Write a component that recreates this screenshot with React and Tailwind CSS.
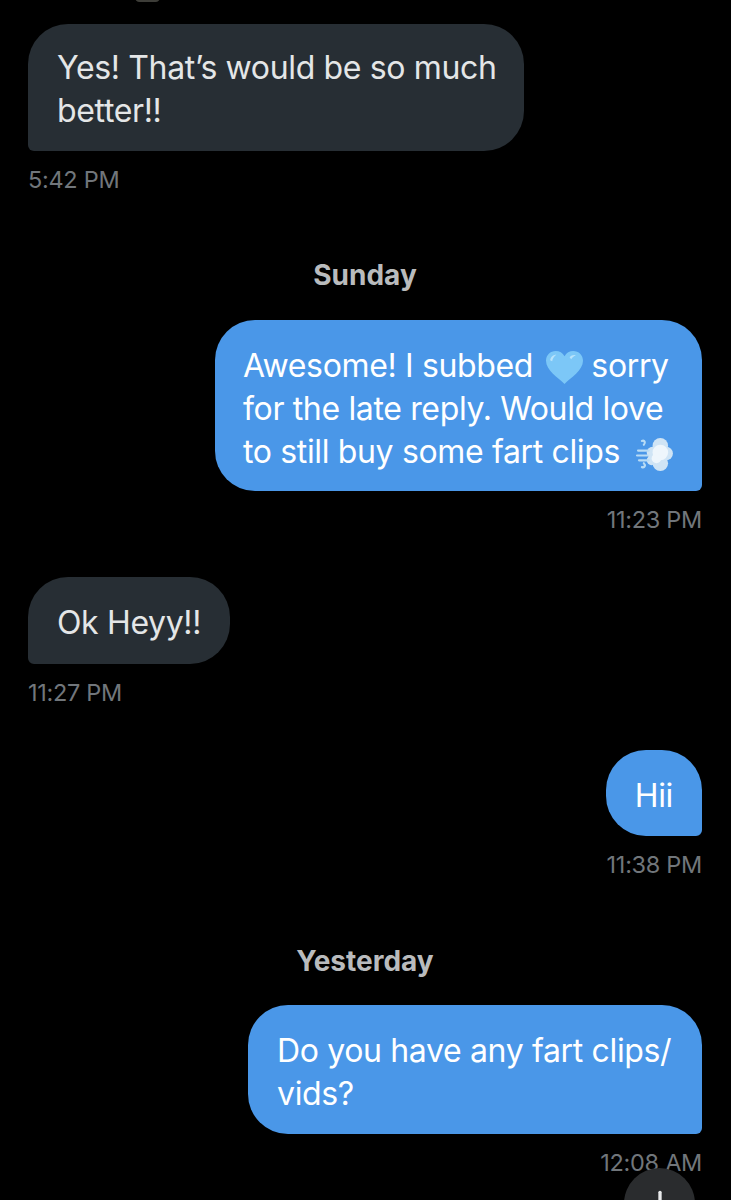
import { ArrowDown } from 'lucide-react';

const Heart = () => (
  <svg viewBox="0 0 36 32" className="inline-block w-[37px] h-[33px] align-[-7px] ml-[4px]">
    <path d="M18 32C12 26 0 19 0 9.500C0 4 4.200 0 9.500 0C13 0 16.300 1.800 18 5C19.700 1.800 23 0 26.500 0C31.800 0 36 4 36 9.500C36 19 24 26 18 32Z" fill="#7cc7f7" />
    <path d="M4 9C4.500 5.500 7 3.500 10 3.500C8 5 6.500 7 6 10Z" fill="#b9e3fb" />
    <path d="M23 6C24.500 4 27 3.500 29 4C27 5 25.500 6 24.500 8Z" fill="#b9e3fb" />
  </svg>
);

const Dash = () => (
  <svg viewBox="0 0 38 34" className="inline-block w-[37px] h-[33px] align-[-8px] ml-[7px]">
    <g fill="#cfe4f5">
      <circle cx="25" cy="8" r="8" />
      <circle cx="31" cy="16" r="7" />
      <circle cx="25" cy="26" r="8" />
      <circle cx="17" cy="15" r="6" />
      <circle cx="16" cy="23" r="5" />
    </g>
    <circle cx="25" cy="15" r="8" fill="#eef6fc" />
    <circle cx="21" cy="21" r="5" fill="#eef6fc" />
    <g stroke="#b8dcf5" strokeWidth="2.200" strokeLinecap="round" fill="none">
      <path d="M2 13H13" />
      <path d="M1 18H12" />
      <path d="M3 23H13" />
      <path d="M6 3C9 2 10 5 8 7" />
      <path d="M6 30C9 31 10 28 8 26" />
    </g>
  </svg>
);

const Bubble = ({ sent, className = '', children }) => (
  <div
    className={`text-[32px] leading-[43px] tracking-[-0.35px] whitespace-nowrap ${
      sent
        ? 'self-end bg-[#4a97e8] text-white rounded-t-[40px] rounded-bl-[40px] rounded-br-[6px]'
        : 'self-start bg-[#272e34] text-[#e4e6e7] rounded-t-[40px] rounded-br-[40px] rounded-bl-[6px]'
    } ${className}`}
  >
    {children}
  </div>
);

const Time = ({ sent, children }) => (
  <div className={`mt-[14px] h-[30px] text-[23.5px] leading-[30px] tracking-[-0.3px] text-[#71767b] ${sent ? 'self-end' : 'self-start'}`}>
    {children}
  </div>
);

const DayLabel = ({ className = '', children }) => (
  <div className={`self-center h-[36px] text-[28px] leading-[36px] font-bold text-[#b9bbbd] ${className}`}>
    {children}
  </div>
);

export default function App() {
  return (
    <div
      className="relative w-[731px] h-[1200px] overflow-hidden bg-black pl-[28px] pr-[29px] pt-[24px] flex flex-col"
      style={{ fontFamily: 'Inter, "Noto Sans", sans-serif' }}
    >
      <div className="absolute top-[-7px] left-[135px] w-[25px] h-[9px] rounded-full bg-[#3d3d38]" />

      <Bubble className="w-[496px] px-[29px] pt-[22px] pb-[19px]">
        Yes! That’s would be so much
        <br />
        better!!
      </Bubble>
      <Time>5:42 PM</Time>

      <DayLabel className="mt-[62px]">Sunday</DayLabel>

      <Bubble sent className="mt-[27px] w-[487px] pl-[28px] pr-[29px] pt-[24px] pb-[18px]">
        Awesome! I subbed <Heart /> sorry
        <br />
        for the late reply. Would love
        <br />
        to still buy some fart clips <Dash />
      </Bubble>
      <Time sent>11:23 PM</Time>

      <Bubble className="mt-[42px] px-[29px] pt-[24px] pb-[20px]">Ok Heyy!!</Bubble>
      <Time>11:27 PM</Time>

      <Bubble sent className="mt-[42px] px-[29px] pt-[24px] pb-[19px]">Hii</Bubble>
      <Time sent>11:38 PM</Time>

      <DayLabel className="mt-[63px]">Yesterday</DayLabel>

      <Bubble sent className="mt-[26px] w-[454px] px-[29px] pt-[24px] pb-[19px]">
        Do you have any fart clips/
        <br />
        vids?
      </Bubble>
      <Time sent>12:08 AM</Time>

      <div className="absolute left-[624px] top-[1168px] w-[71px] h-[71px] rounded-full bg-[#2a2c2e] flex items-center justify-center">
        <ArrowDown className="w-[40px] h-[40px] text-[#e7e9ea]" strokeWidth={2} />
      </div>
    </div>
  );
}
